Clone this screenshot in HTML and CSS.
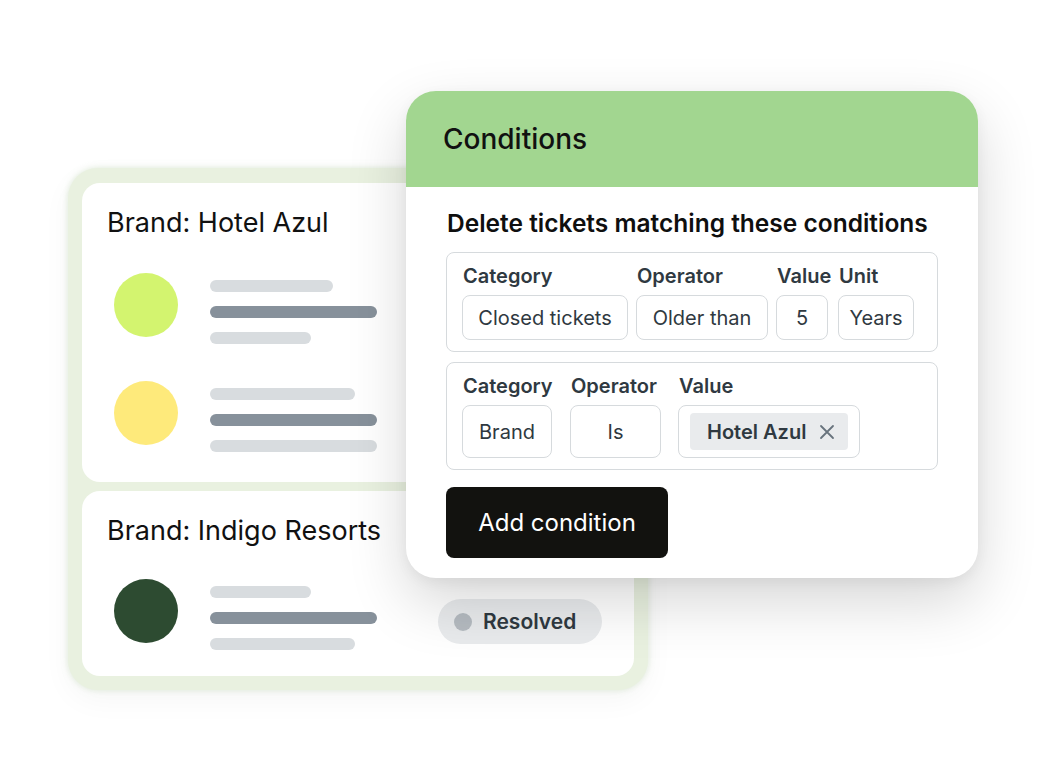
FILE: index.html
```html
<!DOCTYPE html>
<html lang="en">
<head>
<meta charset="utf-8">
<title>Conditions</title>
<link rel="stylesheet" href="styles.css">
</head>
<body>
<div class="stage">
  <div class="frame">
    <div class="card card-top">
      <div class="brand">Brand: Hotel Azul</div>
      <div class="row">
        <div class="dot dot-lime"></div>
        <div class="lines">
          <div class="ln light" style="width:123px"></div>
          <div class="ln dark" style="width:167px"></div>
          <div class="ln light" style="width:101px"></div>
        </div>
      </div>
      <div class="row row-second">
        <div class="dot dot-yellow"></div>
        <div class="lines">
          <div class="ln light" style="width:145px"></div>
          <div class="ln dark" style="width:167px"></div>
          <div class="ln light" style="width:167px"></div>
        </div>
      </div>
    </div>
    <div class="card card-bottom">
      <div class="brand">Brand: Indigo Resorts</div>
      <div class="row row-third">
        <div class="dot dot-green"></div>
        <div class="lines">
          <div class="ln light" style="width:101px"></div>
          <div class="ln dark" style="width:167px"></div>
          <div class="ln light" style="width:145px"></div>
        </div>
        <div class="pill"><span class="pill-dot"></span>Resolved</div>
      </div>
    </div>
  </div>

  <div class="modal">
    <div class="modal-head">Conditions</div>
    <div class="modal-body">
      <div class="subtitle">Delete tickets matching these conditions</div>
      <div class="cond cond-one">
        <div class="col c1"><div class="lbl">Category</div><div class="inp">Closed tickets</div></div>
        <div class="col c2"><div class="lbl">Operator</div><div class="inp">Older than</div></div>
        <div class="col c3"><div class="lbl">Value</div><div class="inp">5</div></div>
        <div class="col c4"><div class="lbl">Unit</div><div class="inp">Years</div></div>
      </div>
      <div class="cond cond-two">
        <div class="col d1"><div class="lbl">Category</div><div class="inp tall">Brand</div></div>
        <div class="col d2"><div class="lbl">Operator</div><div class="inp tall">Is</div></div>
        <div class="col d3"><div class="lbl">Value</div>
          <div class="inp tall tagbox"><span class="tag">Hotel Azul
            <svg class="x" viewBox="0 0 16 16" width="16" height="16"><path d="M2 2 L14 14 M14 2 L2 14" stroke="#68737d" stroke-width="1.8" stroke-linecap="round" fill="none"/></svg>
          </span></div>
        </div>
      </div>
      <button class="add">Add condition</button>
    </div>
  </div>
</div>
</body>
</html>
```

FILE: styles.css
```css
* { box-sizing: border-box; }
html, body { margin: 0; padding: 0; background: #ffffff; }
body {
  font-family: Inter, "Noto Sans", "Liberation Sans", sans-serif;
  width: 1044px;
  height: 783px;
  overflow: hidden;
}
.stage {
  position: relative;
  width: 1044px;
  height: 783px;
  padding: 168px 0 0 68px;
}
.frame {
  width: 580px;
  height: 522px;
  background: #e9f1e0;
  border-radius: 30px;
  padding: 15px 14px 14px 14px;
  display: flex;
  flex-direction: column;
  gap: 9px;
  box-shadow: 0 0 6px rgba(200, 220, 190, 0.6), 0 10px 30px rgba(0,0,0,0.04);
}
.card {
  background: #ffffff;
  border-radius: 18px;
  padding: 25px 25px 0 25px;
}
.card-top { height: 299px; }
.card-bottom { height: 185px; }
.brand {
  font-size: 27px;
  line-height: 30px;
  color: #111111;
  font-weight: 400;
}
.row {
  display: flex;
  align-items: flex-start;
  margin-top: 35px;
  margin-left: 7px;
}
.row-second { margin-top: 37px; }
.row-third { margin-top: 33px; }
.dot {
  width: 64px;
  height: 64px;
  border-radius: 50%;
  flex: none;
}
.dot-lime { background: #d3f46f; }
.dot-yellow { background: #feea7b; }
.dot-green { background: #2d4b31; }
.lines {
  display: flex;
  flex-direction: column;
  gap: 14px;
  padding-top: 7px;
  margin-left: 32px;
}
.ln { height: 12px; border-radius: 6px; }
.ln.light { background: #d8dcdf; }
.ln.dark { background: #87919b; }
.pill {
  margin-left: 61px;
  margin-top: 20px;
  width: 164px;
  height: 45px;
  border-radius: 23px;
  background: #e9ebed;
  display: flex;
  align-items: center;
  padding-left: 16px;
  gap: 11px;
  font-size: 21px;
  font-weight: 600;
  color: #2f3941;
}
.pill-dot {
  width: 18px;
  height: 18px;
  border-radius: 50%;
  background: #b5bbc1;
}

.modal {
  position: absolute;
  left: 406px;
  top: 91px;
  width: 572px;
  height: 487px;
  background: #ffffff;
  border-radius: 30px;
  overflow: hidden;
  box-shadow: 0 24px 60px rgba(0, 0, 0, 0.16), 0 4px 14px rgba(0,0,0,0.05);
}
.modal-head {
  height: 96px;
  background: #a2d690;
  padding: 32px 0 0 37px;
  font-size: 28px;
  line-height: 32px;
  font-weight: 500;
  color: #111111;
}
.modal-body {
  padding: 21px 40px 0 40px;
}
.subtitle {
  font-size: 24.5px;
  line-height: 30px;
  font-weight: 600;
  color: #0f0f0f;
  margin-bottom: 14px;
  padding-left: 1px;
  white-space: nowrap;
}
.cond {
  border: 1.5px solid #d6dadd;
  border-radius: 8px;
  padding: 12px 0 0 15px;
  display: flex;
}
.cond-one { height: 100px; width: 492px; }
.cond-two { height: 108px; width: 492px; margin-top: 10px; }
.col { display: flex; flex-direction: column; }
.lbl {
  font-size: 20px;
  line-height: 22px;
  font-weight: 600;
  color: #2f3941;
  padding-left: 1px;
  white-space: nowrap;
}
.inp {
  margin-top: 8px;
  height: 45px;
  border: 1.5px solid #d6dadd;
  border-radius: 8px;
  display: flex;
  align-items: center;
  justify-content: center;
  font-size: 20px;
  color: #2f3941;
  white-space: nowrap;
}
.inp.tall { height: 53px; }
.c1 { width: 166px; }
.c2 { width: 132px; margin-left: 8px; }
.c3 { width: 52px; margin-left: 8px; }
.c4 { width: 76px; margin-left: 10px; }
.d1 { width: 90px; }
.d2 { width: 91px; margin-left: 18px; }
.d3 { width: 182px; margin-left: 17px; }
.tagbox { justify-content: flex-start; padding-left: 11px; }
.tag {
  height: 37px;
  width: 158px;
  background: #e9ebed;
  border-radius: 4px;
  display: flex;
  align-items: center;
  padding-left: 17px;
  font-weight: 600;
  font-size: 20px;
  color: #2f3941;
  gap: 13px;
}
.x { flex: none; }
.add {
  margin-top: 17px;
  width: 222px;
  height: 71px;
  border: none;
  border-radius: 8px;
  background: #12120f;
  color: #ffffff;
  font-family: Inter, "Noto Sans", "Liberation Sans", sans-serif;
  font-size: 24px;
  font-weight: 400;
  cursor: pointer;
}
```
